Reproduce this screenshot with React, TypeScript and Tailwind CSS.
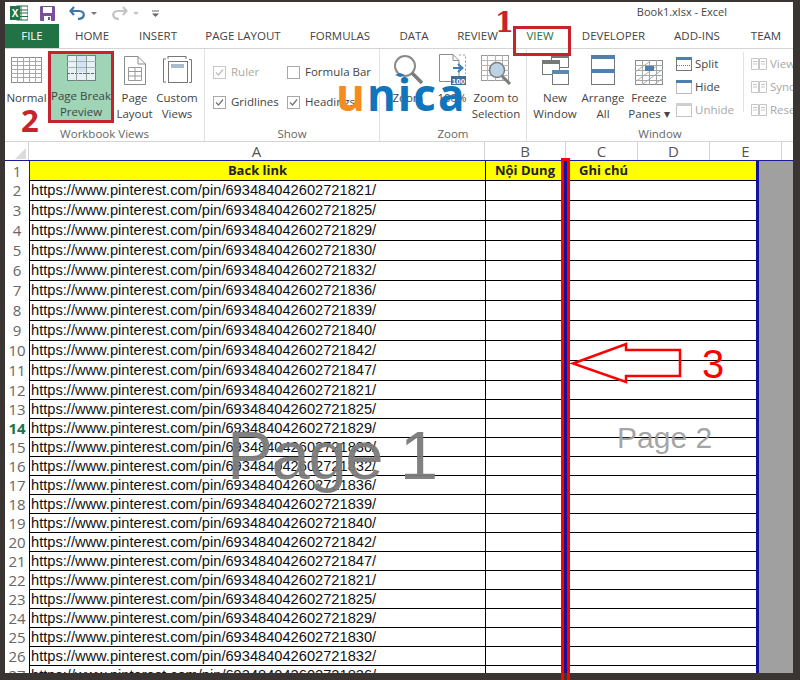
import React from "react";

const ui = "font-['Open_Sans','Noto_Sans',sans-serif]";
const G = "#8c8c8c";

function NormalIcon() {
  return (
    <svg width="31" height="26" viewBox="0 0 31 26" fill="none">
      <rect x="0.5" y="0.5" width="30" height="25" fill="#fff" stroke={G} />
      {[4.5, 8.5, 12.5, 16.5, 20.5].map((y) => <path key={y} d={`M0 ${y}H31`} stroke="#a8a8a8" />)}
      {[6.5, 12.5, 18.5, 24.5].map((x) => <path key={x} d={`M${x} 0V26`} stroke="#a8a8a8" />)}
    </svg>
  );
}
function BreakIcon() {
  return (
    <svg width="29" height="26" viewBox="0 0 29 26" fill="none">
      <rect x="0.5" y="0.5" width="28" height="25" fill="#e8f2f4" stroke="#6f8080" />
      <rect x="10" y="1" width="9" height="16" fill="#d5e4ee" />
      {[6.5, 12.5].map((y) => <path key={y} d={`M0 ${y}H29`} stroke="#a5b5b5" />)}
      <path d="M0 18.5H29" stroke="#5d6f70" strokeDasharray="3 1" />
      {[9.5, 19.5].map((x) => <path key={x} d={`M${x} 0V26`} stroke="#8f9f9f" />)}
    </svg>
  );
}
function DocIcon() {
  return (
    <svg width="22" height="29" viewBox="0 0 22 29" fill="none">
      <path d="M0.5 0.5H14L21.5 8V28.5H0.5Z" fill="#fff" stroke={G} />
      <path d="M14 0.5V8H21.5" stroke={G} />
      <path d="M4.5 11.5H17.5V24.5H4.5ZM4.5 15.5H17.5M4.5 20H17.5M11 11.5V24.5" stroke="#9a9a9a" />
    </svg>
  );
}
function CustomIcon() {
  return (
    <svg width="29" height="29" viewBox="0 0 29 29" fill="none">
      <path d="M0.5 3V26M0 3H3M0 26H3M5 0.5H23M5 0V3M23 0V3" stroke="#777" />
      <path d="M26 3.5H28.5V26.500H26" stroke="#777" />
      <rect x="5.5" y="5.5" width="19" height="21" fill="#fff" stroke="#777" />
      <rect x="8" y="8" width="13" height="4" fill="#a8bcd0" />
    </svg>
  );
}
function MagnifierIcon() {
  return (
    <svg width="30" height="31" viewBox="0 0 30 31" fill="none">
      <circle cx="12" cy="12" r="10" fill="#fff" stroke="#8a8a8a" strokeWidth="2" />
      <path d="M19 19L29 29" stroke="#7b7b7b" strokeWidth="3.5" />
      <path d="M2 21L7 19L12 21L7 23Z" fill="#2e75b5" />
    </svg>
  );
}
function HundredIcon() {
  return (
    <svg width="27" height="31" viewBox="0 0 27 31" fill="none">
      <path d="M0.5 0.5H14L20 6.5V27.5H0.5Z" fill="#fff" stroke={G} />
      <path d="M14 0.5V6.5H20" stroke={G} />
      <path d="M20 1H26.5V20" stroke="#999" strokeDasharray="2 2" />
      <path d="M14 14H23M19 10L23.5 14L19 18" stroke="#3a7fb8" strokeWidth="2" />
      <rect x="12" y="22" width="15" height="9" fill="#3f6f99" />
      <text x="19.5" y="30" textAnchor="middle" fontSize="8" fontWeight="700" fill="#fff" fontFamily="Liberation Sans">100</text>
    </svg>
  );
}
function ZoomSelIcon() {
  return (
    <svg width="31" height="30" viewBox="0 0 31 30" fill="none">
      <rect x="0.5" y="0.5" width="27" height="25" fill="#fff" stroke="#9a9a9a" />
      {[5.5, 10.5, 15.5, 20.5].map((y) => <path key={y} d={`M0 ${y}H28`} stroke="#b5b5b5" />)}
      {[6.5, 14.5, 21.5].map((x) => <path key={x} d={`M${x} 0V26`} stroke="#b5b5b5" />)}
      <circle cx="16" cy="15" r="7.5" fill="#bcd3e6" stroke="#7d7d7d" strokeWidth="1.5" />
      <path d="M21 21L29 29" stroke="#7b7b7b" strokeWidth="3" />
    </svg>
  );
}
function NewWindowIcon() {
  return (
    <svg width="27" height="31" viewBox="0 0 27 31" fill="none">
      <rect x="9.5" y="0.5" width="17" height="13" fill="#fff" stroke="#777" />
      <rect x="9" y="0" width="18" height="4" fill="#777" />
      <rect x="0.5" y="6.5" width="17" height="14" fill="#fff" stroke="#777" />
      <rect x="0" y="6" width="18" height="4" fill="#777" />
      <rect x="10.5" y="16.5" width="16" height="14" fill="#fff" stroke="#777" />
      <rect x="10" y="16" width="17" height="4" fill="#5f86ad" />
    </svg>
  );
}
function ArrangeIcon() {
  return (
    <svg width="24" height="30" viewBox="0 0 24 30" fill="none">
      <rect x="0.5" y="0.5" width="23" height="29" fill="#fff" stroke="#777" />
      <rect x="0" y="0" width="24" height="4" fill="#4f7faf" />
      <rect x="0" y="14" width="24" height="4" fill="#4f7faf" />
    </svg>
  );
}
function FreezeIcon() {
  return (
    <svg width="28" height="25" viewBox="0 0 28 25" fill="none">
      <rect x="0.5" y="0.5" width="27" height="24" fill="#fff" stroke="#8a8a8a" />
      {[5.5, 10.5, 15.5, 20.5].map((y) => <path key={y} d={`M0 ${y}H28`} stroke="#a5a5a5" />)}
      {[7.5, 14.5, 21.5].map((x) => <path key={x} d={`M${x} 0V25`} stroke="#a5a5a5" />)}
      <path d="M0 12L14 2M0 22L22 6M8 24L28 9M20 24L28 18" stroke="#9db5a5" />
      <rect x="10" y="6" width="9" height="5" fill="#4f7faf" />
    </svg>
  );
}
function SplitIcon({ kind }: { kind: "split" | "hide" | "unhide" }) {
  const dim = kind === "unhide";
  const stroke = dim ? "#c4c4c4" : "#777";
  const bar = dim ? "#cfcfcf" : "#4f7faf";
  return (
    <svg width="16" height="14" viewBox="0 0 16 14" fill="none">
      <rect x="0.5" y="0.5" width="15" height="13" fill="#fff" stroke={stroke} strokeDasharray={kind === "hide" ? "1 1" : undefined} />
      <rect x="0" y="0" width="16" height="3" fill={bar} />
      {kind === "split" && <path d="M1 8.5H15" stroke="#777" strokeDasharray="1 1" />}
    </svg>
  );
}
function GrayWinIcon() {
  return (
    <svg width="16" height="12" viewBox="0 0 16 12" fill="none">
      <path d="M0.5 0.5H7.5V11.5H0.5ZM8.5 0.5H15.5V11.5H8.5ZM2 3.5H6M2 6H6M10 3.5H14M10 6H14" stroke="#c6c6c6" />
    </svg>
  );
}

function Big({ icon, lines, className = "", iconClass = "h-[33px]" }: { icon: React.ReactNode; lines: string[]; className?: string; iconClass?: string }) {
  return (
    <div className={`flex flex-col items-center ${className}`}>
      <div className={`flex items-end justify-center ${iconClass}`}>{icon}</div>
      <div className="mt-[5px] text-center leading-[16px]">
        {lines.map((l) => <div key={l} className="whitespace-nowrap">{l}</div>)}
      </div>
    </div>
  );
}

function Check({ on, dim }: { on: boolean; dim?: boolean }) {
  return (
    <span className={`w-[13px] h-[13px] border bg-white flex items-center justify-center ${dim ? "border-[#c8c8c8]" : "border-[#a8a8a8]"}`}>
      {on && (
        <svg width="11" height="11" viewBox="0 0 11 11" fill="none">
          <path d="M2 5.5L4.5 8L9 2.5" stroke={dim ? "#c0c0c0" : "#777"} strokeWidth="1.3" />
        </svg>
      )}
    </span>
  );
}

function CheckRow({ on, dim, label }: { on: boolean; dim?: boolean; label: string }) {
  return (
    <div className="flex items-center gap-[5px] h-[16px]">
      <Check on={on} dim={dim} />
      <span className={`whitespace-nowrap ${dim ? "text-[#a8a8a8]" : ""}`}>{label}</span>
    </div>
  );
}

const tabs: [string, string][] = [
  ["HOME", "w-[66px]"], ["INSERT", "w-[66px]"], ["PAGE LAYOUT", "w-[104px]"], ["FORMULAS", "w-[90px]"],
  ["DATA", "w-[58px]"], ["REVIEW", "w-[69px]"], ["VIEW", "w-[56px] text-[#217346]"], ["DEVELOPER", "w-[91px]"],
  ["ADD-INS", "w-[76px]"], ["TEAM", "w-[62px]"],
];

const suffix = [821, 825, 829, 830, 832, 836, 839, 840, 842, 847];
const rows = Array.from({ length: 26 }, (_, i) => ({ n: i + 2, s: suffix[i % 10] }));

function ColHead({ label, w }: { label: string; w: string }) {
  return <div className={`${w} shrink-0 text-center border-r border-[#d4d4d4]`}>{label}</div>;
}

export default function App() {
  return (
    <div className={`relative w-[800px] h-[680px] overflow-hidden bg-[#3a3532] pl-[5px] pr-[7px] pt-[2px] pb-[7px] ${ui}`}>
      <div className="h-full flex flex-col bg-white text-[#444] text-[11.5px] overflow-hidden">
        {/* Title bar */}
        <div className="h-[22px] shrink-0 flex items-center pl-[5px] pr-[66px]">
          <svg width="18" height="16" viewBox="0 0 18 16">
            <rect x="7" y="1" width="11" height="14" fill="#fff" stroke="#217346" />
            <path d="M11 1V15M7 5H18M7 8H18M7 11.500H18" stroke="#217346" />
            <rect x="0" y="1" width="10" height="14" fill="#217346" />
            <text x="5" y="12" textAnchor="middle" fontSize="10" fontWeight="700" fill="#fff" fontFamily="Liberation Sans">X</text>
          </svg>
          <svg className="ml-[12px]" width="15" height="15" viewBox="0 0 15 15">
            <rect width="15" height="15" rx="1" fill="#7a4f9e" />
            <rect x="3" y="1" width="9" height="6" fill="#fff" />
            <rect x="4" y="10" width="7" height="5" fill="#fff" />
            <rect x="8" y="11" width="2" height="3" fill="#7a4f9e" />
          </svg>
          <svg className="ml-[14px]" width="17" height="14" viewBox="0 0 17 14" fill="none">
            <path d="M5 1L1.500 5L5 9M2 5H10C17 5 16 13 9 13" stroke="#3d76a8" strokeWidth="2.200" />
          </svg>
          <span className="ml-[5px] w-0 h-0 border-x-[3px] border-x-transparent border-t-[3px] border-t-[#777]" />
          <svg className="ml-[14px]" width="17" height="14" viewBox="0 0 17 14" fill="none">
            <path d="M12 1L15.500 5L12 9M15 5H7C0 5 1 13 8 13" stroke="#c4c4c4" strokeWidth="2.200" />
          </svg>
          <span className="ml-[5px] w-0 h-0 border-x-[3px] border-x-transparent border-t-[3px] border-t-[#c4c4c4]" />
          <svg className="ml-[13px]" width="7" height="7" viewBox="0 0 7 7" fill="none">
            <path d="M0 1H7" stroke="#666" />
            <path d="M0 3.500H7L3.500 7Z" fill="#666" />
          </svg>
          <span className="ml-auto text-[11px] text-[#444] -mt-[1px]">Book1.xlsx - Excel</span>
        </div>

        {/* Tabs */}
        <div className="h-[25px] shrink-0 flex items-center border-b border-[#d4d4d4]">
          <div className="w-[54px] shrink-0 h-full bg-[#217346] text-white flex items-center justify-center">FILE</div>
          {tabs.map(([t, w]) => <div key={t} className={`${w} shrink-0 text-center`}>{t}</div>)}
        </div>

        {/* Ribbon */}
        <div className="h-[93px] shrink-0 flex border-b border-[#d4d4d4]">
          <div className="w-[200px] shrink-0 flex flex-col border-r border-[#e2e2e2]">
            <div className="flex h-[76px] pt-[2px] items-start">
              <Big className="w-[43px] shrink-0 pt-[1px]" iconClass="h-[33px] pb-[2px]" icon={<NormalIcon />} lines={["Normal"]} />
              <Big className="w-[66px] h-[72px] shrink-0 bg-[#9fd4b6] border-[3px] border-[#c8232c]" iconClass="h-[31px] pb-[2px]" icon={<BreakIcon />} lines={["Page Break", "Preview"]} />
              <Big className="w-[41px] shrink-0 pt-[1px]" icon={<DocIcon />} lines={["Page", "Layout"]} />
              <Big className="w-[44px] shrink-0 pt-[1px]" icon={<CustomIcon />} lines={["Custom", "Views"]} />
            </div>
            <div className="mt-auto h-[16px] text-center text-[#666]">Workbook Views</div>
          </div>
          <div className="w-[175px] shrink-0 flex flex-col border-r border-[#e2e2e2]">
            <div className="pl-[8px] pt-[15px] grid grid-cols-[74px_1fr] gap-y-[14px]">
              <CheckRow on dim label="Ruler" />
              <CheckRow on={false} label="Formula Bar" />
              <CheckRow on label="Gridlines" />
              <CheckRow on label="Headings" />
            </div>
            <div className="mt-auto h-[16px] text-center text-[#666]">Show</div>
          </div>
          <div className="w-[147px] shrink-0 flex flex-col border-r border-[#e2e2e2]">
            <div className="flex h-[76px] pt-[3px] items-start">
              <Big className="w-[56px] shrink-0" icon={<MagnifierIcon />} lines={["Zoom"]} />
              <Big className="w-[32px] shrink-0" icon={<HundredIcon />} lines={["100%"]} />
              <Big className="w-[56px] shrink-0" icon={<ZoomSelIcon />} lines={["Zoom to", "Selection"]} />
            </div>
            <div className="mt-auto h-[16px] text-center text-[#666]">Zoom</div>
          </div>
          <div className="flex-1 min-w-0 flex flex-col overflow-hidden">
            <div className="flex h-[76px] pt-[3px] items-start">
              <Big className="w-[52px] ml-[2px] shrink-0" icon={<NewWindowIcon />} lines={["New", "Window"]} />
              <Big className="w-[44px] shrink-0" icon={<ArrangeIcon />} lines={["Arrange", "All"]} />
              <Big className="w-[48px] shrink-0" icon={<FreezeIcon />} lines={["Freeze", "Panes ▾"]} />
              <div className="ml-[3px] w-[68px] shrink-0 flex flex-col gap-[7px] pt-[4px] border-r border-[#e2e2e2] h-[60px]">
                <div className="flex items-center gap-[3px] h-[16px]"><SplitIcon kind="split" /><span>Split</span></div>
                <div className="flex items-center gap-[3px] h-[16px]"><SplitIcon kind="hide" /><span>Hide</span></div>
                <div className="flex items-center gap-[3px] h-[16px] text-[#a8a8a8]"><SplitIcon kind="unhide" /><span>Unhide</span></div>
              </div>
              <div className="ml-[7px] flex flex-col gap-[7px] pt-[4px] text-[#a8a8a8] whitespace-nowrap">
                <div className="flex items-center gap-[3px] h-[16px]"><GrayWinIcon /><span>View</span></div>
                <div className="flex items-center gap-[3px] h-[16px]"><GrayWinIcon /><span>Sync</span></div>
                <div className="flex items-center gap-[3px] h-[16px]"><GrayWinIcon /><span>Reset</span></div>
              </div>
            </div>
            <div className="mt-auto h-[16px] text-center text-[#666]">Window</div>
          </div>
        </div>

        {/* Column letters */}
        <div className="h-[18px] shrink-0 flex text-[15px] leading-[18px] text-[#555]">
          <div className="w-[24px] shrink-0 border-r border-[#d4d4d4] overflow-hidden">
            <span className="block w-0 h-0 ml-[10px] mt-[6px] border-l-[11px] border-l-transparent border-b-[11px] border-b-[#dcdcdc]" />
          </div>
          <ColHead label="A" w="w-[456px]" />
          <ColHead label="B" w="w-[81px]" />
          <ColHead label="C" w="w-[72px]" />
          <ColHead label="D" w="w-[72px]" />
          <ColHead label="E" w="w-[72px]" />
        </div>

        {/* Sheet */}
        <div className="flex-1 min-h-0 overflow-hidden bg-[#a0a0a0]">
          <div className="flex h-[21px] border-t border-[#1a1a9a]">
            <div className="w-[24px] shrink-0 bg-white text-center text-[15px] leading-[20px] text-[#666]">1</div>
            <div className="flex text-[13px] leading-[19px] font-bold text-[#222]">
              <div className="w-[456px] shrink-0 bg-[#ffff00] text-center border-l border-[#1a1a9a] border-b border-b-black">Back link</div>
              <div className="w-[79px] shrink-0 bg-[#ffff00] text-center border-l border-black border-b border-b-black">Nội Dung</div>
              <div className="w-[3px] shrink-0 bg-[#12129a]" />
              <div className="w-[189px] shrink-0 bg-[#ffff00] pl-[12px] border-b border-black">Ghi chú</div>
              <div className="w-[3px] shrink-0 bg-[#12129a]" />
            </div>
          </div>
          {rows.map((r) => (
            <div key={r.n} className={`flex ${r.n <= 11 ? "h-[20px]" : "h-[19px]"}`}>
              <div className={`w-[24px] shrink-0 bg-white text-center text-[15px] leading-[19px] ${r.n === 14 ? "font-bold text-[#217346]" : "text-[#666]"}`}>{r.n}</div>
              <div className="w-[456px] shrink-0 bg-white border-l border-[#1a1a9a] border-b border-black pl-[1px] text-[14.65px] leading-[18px] text-[#111] font-['Liberation_Sans'] whitespace-nowrap">
                https://www.pinterest.com/pin/693484042602721{r.s}/
              </div>
              <div className="w-[79px] shrink-0 bg-white border-l border-b border-black" />
              <div className="w-[3px] shrink-0 bg-[#12129a]" />
              <div className="w-[189px] shrink-0 bg-white border-b border-black" />
              <div className="w-[3px] shrink-0 bg-[#12129a]" />
            </div>
          ))}
        </div>
      </div>

      {/* Annotations over the picture */}
      <div className="absolute left-[513px] top-[26px] w-[58px] h-[30px] border-[3px] border-[#c8232c]" />
      <div className="absolute left-[495px] top-[5px] text-[27px] leading-[36px] font-bold text-[#c8232c] font-['DejaVu_Serif']">1</div>
      <div className="absolute left-[21px] top-[100px] text-[31px] leading-[40px] font-bold text-[#c8232c]">2</div>
      <div className="absolute left-[702px] top-[342px] text-[40px] leading-[44px] text-[#ff0000] font-['Liberation_Sans']">3</div>
      <div className="absolute left-[561px] top-[158px] w-[9px] h-[522px] border-[3px] border-b-0 border-[#ff0000]" />
      <svg className="absolute left-[568px] top-[340px]" width="116" height="46" viewBox="0 0 116 46" fill="none">
        <path d="M5 23.500L58 4V10H112V36H58V42Z" stroke="#ff0000" strokeWidth="2.500" />
      </svg>
      <div className="absolute left-[227px] top-[416px] text-[69px] leading-[80px] tracking-[-1.500px] text-[#7a7a7a]/95 font-['Liberation_Sans'] whitespace-nowrap">Page 1</div>
      <div className="absolute left-[617px] top-[420px] text-[30px] leading-[36px] text-[#a0a0a0]/95 font-['Liberation_Sans'] whitespace-nowrap">Page 2</div>
      <div className="absolute left-[336px] top-[66px] text-[44px] leading-[56px] font-bold tracking-[2px] whitespace-nowrap">
        <span className="text-[#f68b1f]">u</span><span className="text-[#0f75bc]">nica</span>
      </div>
    </div>
  );
}
